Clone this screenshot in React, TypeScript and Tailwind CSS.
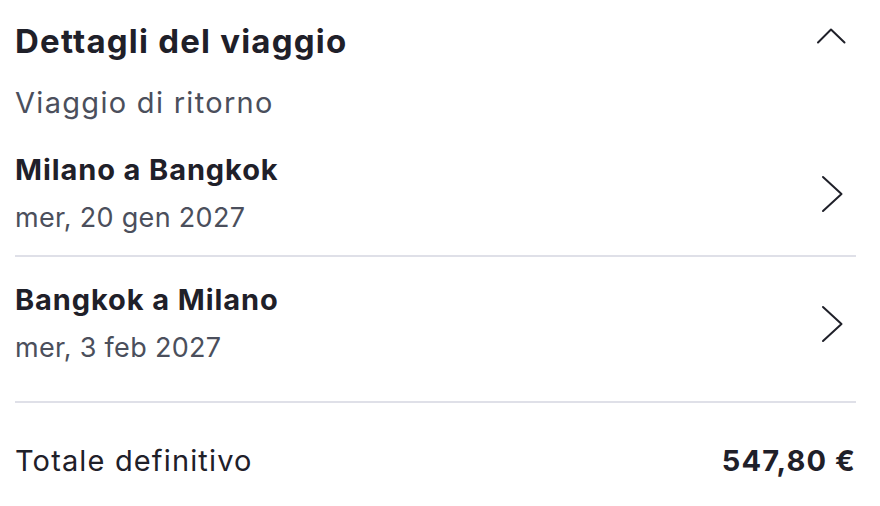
import React from "react";

const ChevronRight = () => (
  <svg width="23" height="38" viewBox="0 0 23 38" fill="none" stroke="#1f2029" strokeWidth="2" strokeLinecap="round" strokeLinejoin="round">
    <path d="M2 2 L20.5 19 L2 36" />
  </svg>
);

const ChevronUp = () => (
  <svg width="30" height="16" viewBox="0 0 30 16" fill="none" stroke="#1f2029" strokeWidth="2" strokeLinecap="round" strokeLinejoin="round">
    <path d="M2 14.5 L15 1.5 L28.5 14.5" />
  </svg>
);

function Leg({ title, date, pb }: { title: string; date: string; pb: string }) {
  return (
    <div className={`border-b-2 border-[#dfe0e8] ${pb}`}>
      <div className="flex items-center justify-between">
        <div className="flex flex-col">
          <div className="text-[29px] leading-[36px] font-bold text-[#1f2029] tracking-[0.9px]">{title}</div>
          <div className="text-[27px] leading-[34px] text-[#4b4f5c] mt-[13px] tracking-[0.3px]">{date}</div>
        </div>
        <div className="mr-[12px]">
          <ChevronRight />
        </div>
      </div>
    </div>
  );
}

export default function App() {
  return (
    <div
      className="w-[880px] h-[506px] bg-white pl-[15px] pr-[24px] overflow-hidden"
      style={{ fontFamily: "Inter, 'Noto Sans', sans-serif" }}
    >
      <div className="flex items-start justify-between pt-[21px]">
        <div className="text-[33px] leading-[40px] font-bold text-[#1f2029] tracking-[1.2px]">Dettagli del viaggio</div>
        <div className="mr-[10px] mt-[7px]">
          <ChevronUp />
        </div>
      </div>
      <div className="text-[29px] leading-[36px] text-[#4b4f5c] mt-[24px] tracking-[1.3px]">Viaggio di ritorno</div>
      <div className="flex flex-col mt-[31px]">
        <Leg title="Milano a Bangkok" date="mer, 20 gen 2027" pb="pb-[20px]" />
        <div className="pt-[25px]">
          <Leg title="Bangkok a Milano" date="mer, 3 feb 2027" pb="pb-[36px]" />
        </div>
      </div>
      <div className="flex items-center justify-between mt-[40px]">
        <div className="text-[29px] leading-[36px] text-[#1f2029] tracking-[1.15px]">Totale definitivo</div>
        <div className="text-[29px] leading-[36px] font-bold text-[#1f2029] tracking-[1.1px]">547,80 €</div>
      </div>
    </div>
  );
}
